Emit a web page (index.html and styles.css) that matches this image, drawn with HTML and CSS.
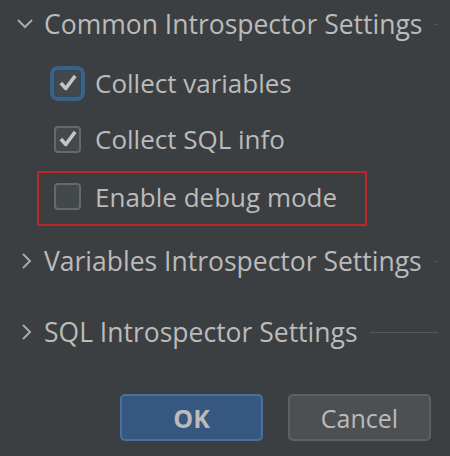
FILE: index.html
```html
<!DOCTYPE html>
<html>
<head>
<meta charset="utf-8">
<link rel="stylesheet" href="styles.css">
</head>
<body>
<div class="dialog">
  <div class="section-header first">
    <svg class="chev" width="16" height="16" viewBox="0 0 16 16"><path d="M1 4 L8 11 L15 4" fill="none" stroke="#a9a9a9" stroke-width="2"/></svg>
    <span class="title">Common Introspector Settings</span>
    <span class="rule"></span>
  </div>
  <div class="check-row r1">
    <span class="box focused"><svg viewBox="0 0 20 20" width="22" height="22"><path d="M3.5 10 L8 15 L16.5 3.5" fill="none" stroke="#c4c4c4" stroke-width="3.2" stroke-linejoin="round"/></svg></span>
    <span class="label">Collect variables</span>
  </div>
  <div class="check-row r2">
    <span class="box"><svg viewBox="0 0 20 20" width="22" height="22"><path d="M3.5 10 L8 15 L16.5 3.5" fill="none" stroke="#c4c4c4" stroke-width="3.2" stroke-linejoin="round"/></svg></span>
    <span class="label">Collect SQL info</span>
  </div>
  <div class="check-row r3 highlight">
    <span class="box"></span>
    <span class="label">Enable debug mode</span>
  </div>
  <div class="section-header second">
    <svg class="chev" width="16" height="16" viewBox="0 0 16 16"><path d="M4 1 L11 8 L4 15" fill="none" stroke="#a9a9a9" stroke-width="2"/></svg>
    <span class="title">Variables Introspector Settings</span>
    <span class="rule"></span>
  </div>
  <div class="section-header third">
    <svg class="chev" width="16" height="16" viewBox="0 0 16 16"><path d="M4 1 L11 8 L4 15" fill="none" stroke="#a9a9a9" stroke-width="2"/></svg>
    <span class="title">SQL Introspector Settings</span>
    <span class="rule"></span>
  </div>
  <div class="buttons">
    <button class="btn ok">OK</button>
    <button class="btn cancel">Cancel</button>
  </div>
</div>
</body>
</html>
```
FILE: styles.css
```css
html, body {
  margin: 0;
  padding: 0;
  background: #3c3f41;
}
body {
  width: 450px;
  height: 456px;
  overflow: hidden;
  font-family: "Open Sans", "Noto Sans", sans-serif;
  color: #bbbbbb;
}
.dialog {
  display: flex;
  flex-direction: column;
}
.section-header {
  display: flex;
  align-items: center;
  height: 48px;
  padding-left: 17px;
  padding-right: 12px;
}
.section-header .chev {
  flex: none;
  width: 16px;
  height: 16px;
  margin-right: 11px;
}
.section-header.second .chev,
.section-header.third .chev {
  margin-left: 2px;
  margin-right: 9px;
}
.title {
  font-size: 26.5px;
  white-space: nowrap;
  letter-spacing: 0;
}
.rule {
  flex: 1;
  height: 1px;
  background: #545759;
  margin-left: 12px;
}
.section-header.second {
  margin-top: 11px;
}
.section-header.third {
  margin-top: 23px;
}
.check-row {
  display: flex;
  align-items: center;
  height: 56px;
  padding-left: 54px;
}
.check-row.r1 {
  margin-top: 7px;
}
.check-row.highlight {
  box-sizing: border-box;
  width: 330px;
  height: 55px;
  margin-top: 4px;
  margin-left: 37px;
  padding-left: 15px;
  border: 2px solid #bb262b;
  padding-bottom: 4px;
}
.box {
  flex: none;
  box-sizing: border-box;
  width: 27px;
  height: 27px;
  border: 2px solid #65696b;
  border-radius: 4px;
  background: #43494a;
  display: flex;
  align-items: center;
  justify-content: center;
  margin-right: 14px;
}
.box.focused {
  border-color: #2f4a66;
  box-shadow: 0 0 0 4px #3d6185;
}
.label {
  font-size: 26px;
  white-space: nowrap;
}
.buttons {
  display: flex;
  justify-content: flex-end;
  gap: 25px;
  padding-right: 19px;
  margin-top: 38px;
}
.btn {
  box-sizing: border-box;
  width: 143px;
  height: 47px;
  border-radius: 5px;
  font-family: "Open Sans", "Noto Sans", sans-serif;
  font-size: 25px;
  color: #bbbbbb;
  padding: 0;
}
.btn.ok {
  background: #365880;
  border: 2px solid #4c709a;
  font-weight: bold;
}
.btn.cancel {
  background: #4c5052;
  border: 2px solid #5e6162;
}
```
